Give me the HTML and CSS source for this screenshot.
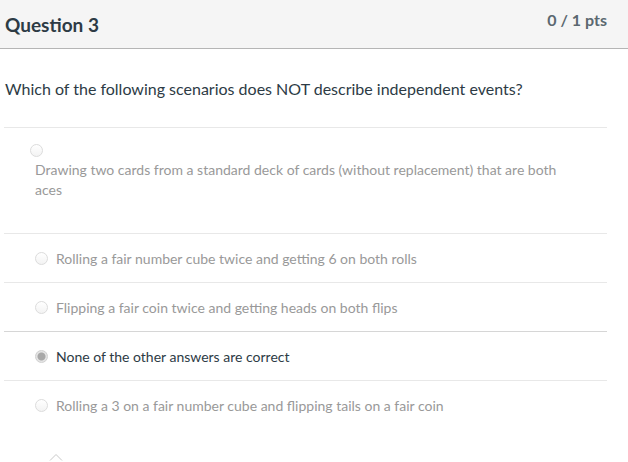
FILE: index.html
```html
<!DOCTYPE html>
<html>
<head>
<meta charset="utf-8">
<link rel="stylesheet" href="styles.css">
</head>
<body>
<div class="question">
  <div class="header">
    <h2 class="title">Question 3</h2>
    <div class="pts">0 / 1 pts</div>
  </div>
  <div class="content">
    <p class="prompt">Which of the following scenarios does NOT describe independent events?</p>
    <div class="answers">
      <div class="answer block">
        <span class="radio"></span>
        <div class="atext">Drawing two cards from a standard deck of cards (without replacement) that are both aces</div>
      </div>
      <div class="answer">
        <span class="radio"></span>
        <div class="atext">Rolling a fair number cube twice and getting 6 on both rolls</div>
      </div>
      <div class="answer">
        <span class="radio"></span>
        <div class="atext">Flipping a fair coin twice and getting heads on both flips</div>
      </div>
      <div class="answer selected">
        <span class="radio"></span>
        <div class="atext">None of the other answers are correct</div>
      </div>
      <div class="answer">
        <span class="radio"></span>
        <div class="atext">Rolling a 3 on a fair number cube and flipping tails on a fair coin</div>
      </div>
    </div>
    <div class="chevron">
      <svg width="14" height="8" viewBox="0 0 14 8"><path d="M1 7.5 L7 1.5 L13 7.5" fill="none" stroke="#c8c8c8" stroke-width="1"/></svg>
    </div>
  </div>
</div>
</body>
</html>
```

FILE: styles.css
```css
html, body {
  margin: 0;
  padding: 0;
  background: #fff;
  font-family: Lato, "Open Sans", sans-serif;
  color: #2d3b45;
}

.question {
  width: 628px;
}

.header {
  display: flex;
  justify-content: space-between;
  align-items: flex-start;
  background: #f5f5f5;
  height: 48px;
  border-bottom: 1px solid #b5b5b5;
  padding: 0 21px 0 5px;
}

.title {
  margin: 0;
  padding-top: 13px;
  font-size: 19px;
  line-height: 24px;
  font-weight: 700;
  color: #2d3b45;
}

.pts {
  padding-top: 10px;
  font-size: 16px;
  line-height: 20px;
  font-weight: 700;
  color: #5b6870;
}

.content {
  padding: 0 21px 0 4px;
}

.prompt {
  margin: 0;
  padding: 28px 0 26px 1px;
  font-size: 16px;
  line-height: 24px;
  color: #2d3b45;
}

.answers {
  border-top: 1px solid #e8e8e8;
}

.answer {
  display: flex;
  align-items: center;
  gap: 8px;
  height: 48px;
  padding-left: 31px;
  border-bottom: 1px solid #e8e8e8;
  font-size: 14px;
  color: #999;
}

.answer.block {
  display: block;
  height: auto;
  padding: 16px 0 33px 31px;
}

.answer.block .radio {
  display: block;
  margin-left: -5px;
  margin-bottom: 3px;
}

.answer.block .atext {
  line-height: 20px;
  padding-right: 40px;
}

.answer:nth-child(3) {
  border-bottom-color: #d6d6d6;
}

.answer:last-child {
  border-bottom: none;
}

.radio {
  width: 11px;
  height: 11px;
  border-radius: 50%;
  border: 1px solid #dcdcdc;
  background: linear-gradient(#fff, #f3f3f3);
  flex: none;
  box-sizing: content-box;
}

.selected .radio {
  border-color: #d0d0d0;
  background: radial-gradient(circle, #a8a8a8 0 3.5px, #e4e4e4 4.5px);
}

.selected {
  color: #2d3b45;
}

.chevron {
  padding: 24px 0 0 45px;
  height: 10px;
  line-height: 0;
}
```
